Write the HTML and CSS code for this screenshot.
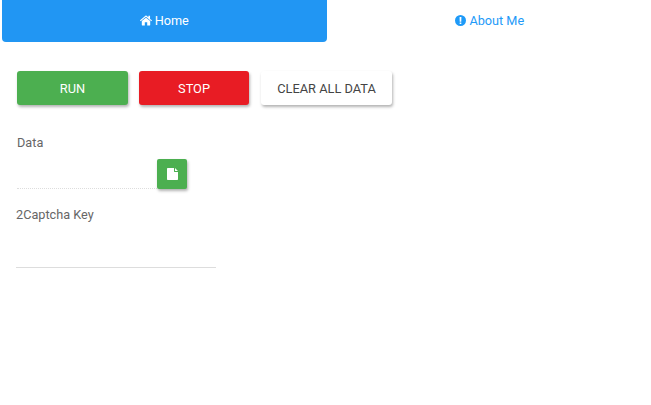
FILE: index.html
```html
<!DOCTYPE html>
<html lang="en">
<head>
<meta charset="utf-8">
<title>Home</title>
<link rel="stylesheet" href="styles.css">
</head>
<body>
<nav class="tabs">
  <a class="tab tab-active">
    <svg class="tab-icon" viewBox="0 0 16 14"><path d="M13.6 7.8V13c0 .3-.2.5-.5.5H9.6V9.4H6.4v4.1H2.9c-.3 0-.5-.2-.5-.5V7.8L8 3.2zM15.9 7.1l-.6.7a.2.2 0 0 1-.2.1L8 2 .9 7.9a.2.2 0 0 1-.2-.1l-.6-.7c-.1-.1-.1-.2 0-.3L7.300.6c.4-.4 1-.4 1.400 0l2.500 2.100V.7c0-.1.100-.2.200-.2h1.800c.1 0 .2.100.2.200v4.400l2.500 1.700c.1.100.1.200 0 .3z"/></svg>
    <span>Home</span>
  </a>
  <a class="tab tab-second">
    <svg class="tab-icon tab-icon-info" viewBox="0 0 12 12"><path fill-rule="evenodd" d="M6 0a6 6 0 1 1 0 12A6 6 0 0 1 6 0zM5 2.200l.15 5.100h1.700L7 2.200zM5.100 8.200v1.700h1.800V8.200z"/></svg>
    <span>About Me</span>
  </a>
</nav>
<main class="page">
  <div class="actions">
    <button class="btn btn-run">RUN</button>
    <button class="btn btn-stop">STOP</button>
    <button class="btn btn-clear">CLEAR ALL DATA</button>
  </div>
  <section class="field-data">
    <label class="label">Data</label>
    <div class="file-row">
      <div class="file-line"></div>
      <button class="file-btn" aria-label="Choose file">
        <svg class="file-icon" viewBox="0 0 11 12"><path d="M7 0v3.500c0 .3.200.5.500.5H11v7.300c0 .4-.3.700-.7.700H.7c-.4 0-.7-.3-.7-.7V.7C0 .3.300 0 .7 0zM8 0l3 3H8z"/></svg>
      </button>
    </div>
  </section>
  <section class="field-key">
    <label class="label label-key">2Captcha Key</label>
    <div class="key-line"></div>
  </section>
</main>
</body>
</html>
```

FILE: styles.css
```css
* {
  box-sizing: border-box;
}

html,
body {
  margin: 0;
  background: #fff;
}

body {
  font-family: Roboto, "Liberation Sans", sans-serif;
  font-size: 13px;
  color: #555;
  width: 651px;
  height: 405px;
  overflow: hidden;
}

.tabs {
  display: flex;
  padding: 0 0 0 2px;
}

.tab {
  width: 325px;
  height: 42px;
  padding-bottom: 2px;
  display: flex;
  align-items: center;
  justify-content: center;
  gap: 3px;
  font-size: 12.7px;
  color: #1e9af8;
  border-radius: 0 0 4px 4px;
}

.tab-second {
  padding-left: 2px;
}

.tab-active {
  background: #2196f3;
  color: #fff;
}

.tab-icon {
  width: 12px;
  height: 11px;
  fill: currentColor;
}

.tab-icon-info {
  width: 11px;
  height: 11px;
}

.page {
  padding: 29px 0 0 17px;
}

.actions {
  display: flex;
  gap: 11px;
}

.btn {
  height: 34px;
  border: 0;
  border-radius: 3px;
  font-family: inherit;
  font-size: 12.8px;
  padding: 0;
  box-shadow: 1px 2px 3px rgba(0, 0, 0, 0.3);
}

.btn-run {
  width: 111px;
  background: #4caf50;
  color: #fff;
}

.btn-stop {
  width: 110px;
  background: #e81c24;
  color: #fff;
}

.btn-clear {
  width: 131px;
  margin-left: 1px;
  background: #fff;
  color: #444;
}

.field-data {
  margin-top: 30px;
}

.label {
  display: block;
  font-size: 12.7px;
  line-height: 15px;
  color: #666;
}

.file-row {
  display: flex;
  align-items: flex-end;
  width: 170px;
  margin-top: 9px;
}

.file-line {
  flex: 1;
  border-bottom: 1px dotted #ddd;
}

.file-btn {
  width: 30px;
  height: 30px;
  padding: 0;
  border: 0;
  border-radius: 2px;
  background: #4caf50;
  display: flex;
  align-items: center;
  justify-content: center;
  box-shadow: 1px 2px 3px rgba(0, 0, 0, 0.3);
}

.file-icon {
  width: 11px;
  height: 12px;
  fill: #fff;
}

.field-key {
  margin-left: -1px;
  margin-top: 18px;
}

.key-line {
  width: 200px;
  margin-top: 45px;
  border-bottom: 1px solid #ddd;
}
```
